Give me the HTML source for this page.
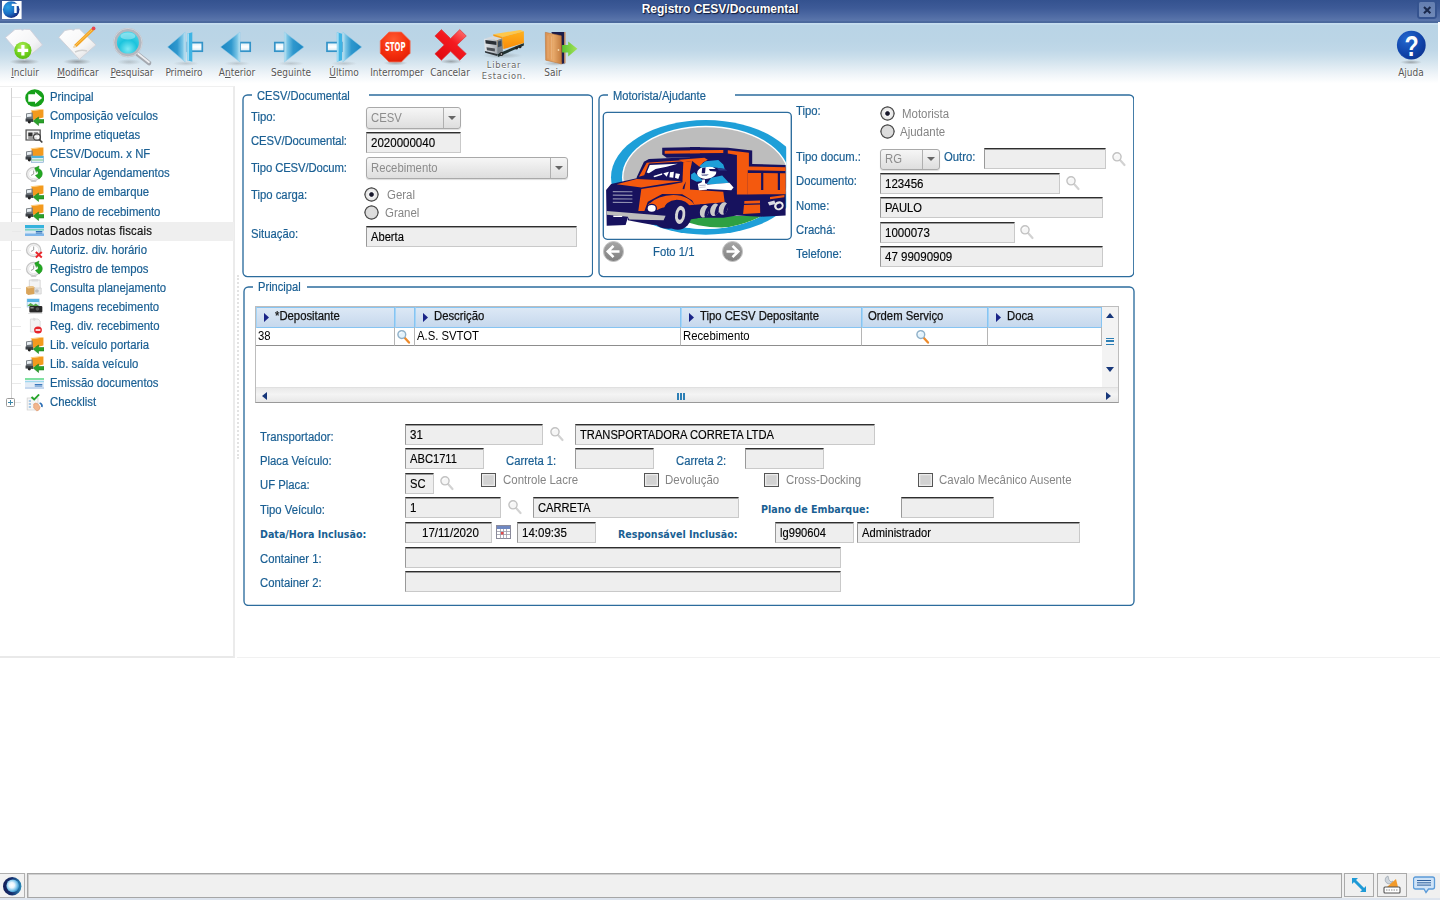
<!DOCTYPE html>
<html lang="pt-BR">
<head>
<meta charset="utf-8">
<title>Registro CESV/Documental</title>
<style>
*{box-sizing:border-box;margin:0;padding:0}
html,body{width:1440px;height:900px;overflow:hidden;background:#fff}
body{position:relative;font-family:"Liberation Sans",Arial,sans-serif;font-size:11px;color:#000}
.abs{position:absolute}
svg{display:block}
#titlebar{position:absolute;left:0;top:0;width:1440px;height:22.6px;background:linear-gradient(#34528f 0%,#3d5a97 35%,#4f6ba4 70%,#5a75ab 89%,#4a689c 94%,#4a689c 100%)}
#title{position:absolute;left:0;top:2px;width:1440px;text-align:center;color:#fff;font-weight:bold;font-size:12px;line-height:14px;text-shadow:1px 1px 1px #0e1838,0 0 1.5px #1a2a55}
#closebtn{position:absolute;left:1418.800px;top:1.7px;width:15.8px;height:15.8px;border-radius:1.5px;background:linear-gradient(#647eb0,#7089b8);box-shadow:0 0 0 2px #35538f}
#toolbar{position:absolute;left:0;top:22.6px;width:1438px;height:61.4px;background:linear-gradient(#c8dff0 0%,#c4dcee 2%,#b9d4e6 4%,#bbd5e6 30%,#c0d8e8 45%,#cde0ec 58%,#deeaf2 71%,#f0f5f9 85%,#ffffff 99%)}
#tbright{position:absolute;left:1438px;top:22px;width:2px;height:62px;background:#fff}
.tbi{position:absolute;top:24px;width:48px;height:46px}
.tbl,.tbl2{position:absolute;width:80px;text-align:center;top:66.7px;font-family:"DejaVu Sans Condensed","DejaVu Sans",sans-serif;font-size:10px;line-height:12px;color:#555;text-shadow:0 1px 0 #fff,0 0 2px #fff}
.tbl2{top:58.8px;line-height:11.1px;letter-spacing:0.75px;font-size:9.2px;color:#666}
#left{position:absolute;left:0;top:86px;width:235.4px;height:572.3px;border-right:2px solid #ebebeb;border-bottom:2px solid #e9e9e9;border-top:1px solid #f0f0f0}
#treeline{position:absolute;left:11px;top:88px;width:0;height:315px;border-left:1px solid #d2d2d2}
.tr{position:absolute;left:0;width:234px;height:19px;line-height:19px;color:#1a5f93;font-size:12px;-webkit-text-stroke:0.2px #1a5f93}
.tr.sel{background:#efefef;color:#111;letter-spacing:0.2px;-webkit-text-stroke:0.2px #111}
.tr b{position:absolute;left:50px;top:0;font-weight:normal;white-space:nowrap;transform:scaleX(0.946);transform-origin:0 50%}
.tr svg{position:absolute;left:24.5px;top:0.5px}
.tr .dash{position:absolute;left:12px;top:9px;width:9px;border-top:1px solid #e9e9e9}
#plus{position:absolute;left:5.5px;top:397.500px;width:9.5px;height:9.5px;border:1px solid #9a9a9a;border-radius:1.5px;background:#fff}
#plus:before{content:"";position:absolute;left:1.25px;top:3.25px;width:5px;height:1px;background:#3a86a8}
#plus:after{content:"";position:absolute;left:3.25px;top:1.25px;width:1px;height:5px;background:#3a86a8}
.lbl{position:absolute;color:#1a5f93;white-space:nowrap;line-height:14px;font-size:12px;transform:scaleX(0.942);transform-origin:0 50%;-webkit-text-stroke:0.2px #1a5f93}
.bl{position:absolute;color:#1a5f93;white-space:nowrap;line-height:14px;font-family:"DejaVu Sans Condensed","DejaVu Sans",sans-serif;font-weight:bold;font-size:10.6px}
.gl{position:absolute;color:#858585;white-space:nowrap;line-height:14px;font-size:12px;transform:scaleX(0.955);transform-origin:0 50%}
.inp{position:absolute;height:21px;background:#eee;border:1px solid #c9c9c9;border-top:1px solid #2e2e2e;border-left:1px solid #999;box-shadow:inset 0 1px 0 #9a9a9a;line-height:21.3px;padding-left:4px;white-space:nowrap;overflow:hidden;font-size:12px;color:#000;-webkit-text-stroke:0.15px #000}
.sx{display:inline-block;transform:scaleX(0.93);transform-origin:0 50%}
.sn{display:inline-block;transform:scaleX(0.96);transform-origin:0 50%}
.sg{display:inline-block;transform:scaleX(0.942);transform-origin:0 50%}
.cmb{position:absolute;height:22px;border:1px solid #a9a9a9;border-radius:3px;background:linear-gradient(#f6f6f6,#dedede);color:#8c8c8c;line-height:20px;padding-left:4px;font-size:12px;box-shadow:0 1px 1px #ddd}
.cmb i{position:absolute;right:0;top:0;width:17px;height:20px;border-left:1px solid #b0b0b0}
.cmb i:after{content:"";position:absolute;left:4px;top:calc(50% - 2px);border:4px solid transparent;border-top:4px solid #666;border-bottom:0}
.grp{position:absolute}
.leg{position:absolute;background:#fff;color:#1a5f93;line-height:14px;height:14px;white-space:nowrap;font-size:12px;padding-left:5px;-webkit-text-stroke:0.2px #1a5f93}
.leg span{display:inline-block;transform:scaleX(0.928);transform-origin:0 50%}
.rad{position:absolute;width:15px;height:15px;border-radius:50%;background:radial-gradient(circle,#dedede 0,#dcdcdc 5.4px,#555 6.3px,#555 6.9px,rgba(85,85,85,0) 7.5px)}
.rad.on{background:radial-gradient(circle,#16162a 0,#16162a 1.8px,#f2f2f2 2.8px,#e6e6e6 5.4px,#555 6.3px,#555 6.9px,rgba(85,85,85,0) 7.5px)}
.chk{position:absolute;width:14.5px;height:14.5px;border:1.2px solid #555;background:#d2d2d2;box-shadow:inset 0 0 0 1.3px #ececec}
#photo{position:absolute;left:603px;top:112px;width:188px;height:128px;background:#fff}
#photof{position:absolute;left:602px;top:111px}
#grid{position:absolute;left:255px;top:306px;width:864px;height:97px;border:1px solid #bdbdbd;border-bottom:1px solid #999;background:#fff;overflow:hidden;font-size:12px}
.gh{position:absolute;top:0;height:20.5px;line-height:16.5px;background:linear-gradient(#dce8f5,#c6d8ed);border:1px solid #86c4f2;border-left-color:#a4d4f7;white-space:nowrap;color:#111;-webkit-text-stroke:0.25px #111}
.gh .ha{position:absolute;left:6.5px;top:4.5px;width:5.5px;height:10px;background:#1a2488;clip-path:polygon(0 0,100% 50%,0 100%)}
.gc{position:absolute;top:20px;height:19px;line-height:18px;border-right:1px solid #b5b5b5;border-bottom:1px solid #8d8d8d;padding-left:2px;white-space:nowrap}
#vs{position:absolute;left:846px;top:0;width:17px;height:80px;background:#f3f3f3}
#vs .up{position:absolute;left:4px;top:6px;border:4px solid transparent;border-bottom:5px solid #17377a;border-top:0}
#vs .dn{position:absolute;left:4px;top:60px;border:4px solid transparent;border-top:5px solid #17377a;border-bottom:0}
#vs .grip{position:absolute;left:4px;top:31px;width:8px;height:7px;border-top:1.5px solid #2d7fb5;border-bottom:1.5px solid #2d7fb5}
#vs .grip:after{content:"";position:absolute;left:0;top:1.2px;width:8px;height:1.5px;background:#2d7fb5}
#hs{position:absolute;left:0;top:79.5px;width:863px;height:17px;background:linear-gradient(#e9e9e9,#f4f4f4 40%,#e4e4e4);border-top:1px solid #e0e0e0}
#hs .lf{position:absolute;left:6px;top:4px;border:4px solid transparent;border-right:5px solid #17377a;border-left:0}
#hs .rt{position:absolute;left:850px;top:4px;border:4px solid transparent;border-left:5px solid #17377a;border-right:0}
#hs .hgrip{position:absolute;left:421px;top:5px;width:8px;height:7px;border-left:2px solid #2d7fb5;border-right:2px solid #2d7fb5}
#hs .hgrip:after{content:"";position:absolute;left:1px;top:0;width:2px;height:7px;background:#2d7fb5}
#hsep{position:absolute;left:237px;top:657px;width:1203px;height:1.4px;background:#f1f1f1}
#status{position:absolute;left:0;top:872.5px;width:1440px;height:27.5px;background:#f0f0f0;border-bottom:2px solid #dde4ee}
#sfield{position:absolute;left:27px;top:873px;width:1315px;height:24.5px;border:1px solid #a6a6a6;box-shadow:inset 1px 1px 0 #cfcfcf;background:#f0f0f0}
#slogo{position:absolute;left:0;top:873px;width:24.5px;height:24.5px;border:1px solid #b0b0b0;border-left:0;background:#f2f2f2}
.sbtn{position:absolute;top:873px;width:30px;height:24px;border:1px solid #aaa;background:#f0f0f0}
#split{position:absolute;left:237px;top:275px;width:0;height:184px;border-left:2px dotted #e2e2e2}
</style>
</head>
<body>
<div id="titlebar"></div>
<div id="title">Registro CESV/Documental</div>
<div class="abs" style="left:2px;top:0.8px"><svg width="19.6" height="18.6" viewBox="0 0 19.6 18.6" ><rect x="0" y="0" width="19.6" height="18.6" fill="#fff"/><defs><radialGradient id="g1" cx="0.3" cy="0.35" r="0.75"><stop offset="0" stop-color="#2aa2e6"/><stop offset="0.55" stop-color="#1c6fc4"/><stop offset="1" stop-color="#16257c"/></radialGradient></defs><circle cx="9.2" cy="8.600" r="8.3" fill="url(#g1)"/><path d="M9.700 2.700 h7.100 v2.200 h-2.100 v7.200 h-2.500 v-7.200 h-2.500z" fill="#fff"/></svg></div>
<div id="closebtn"><svg width="15.8" height="15.8" viewBox="0 0 15.8 15.8" ><path d="M5 5 L11.4 11.2 M11.4 5 L5 11.2" stroke="#1a294c" stroke-width="2.1" stroke-linecap="butt"/></svg></div>
<div id="toolbar"></div><div id="tbright"></div>
<div class="tbi" style="left:1px"><svg width="48" height="46" viewBox="0 0 48 46" ><defs><radialGradient id="g3"><stop offset="0" stop-color="#555" stop-opacity="0.5"/><stop offset="1" stop-color="#555" stop-opacity="0"/></radialGradient></defs><ellipse cx="23.4" cy="37.7" rx="15" ry="3" fill="url(#g3)"/><defs><linearGradient id="g2" x1="0" y1="0" x2="1" y2="1"><stop offset="0" stop-color="#fff"/><stop offset="0.6" stop-color="#f4f4f6"/><stop offset="1" stop-color="#d4d4da"/></linearGradient></defs><path d="M14 5.5 L19.500 5.3 L21.5 6.200 L23.500 5.3 L29 5.5 L41.5 21 L23.5 36 L4.5 13.5 Z" fill="url(#g2)" stroke="#cfcfda" stroke-width="0.9" stroke-linejoin="round"/><defs><radialGradient id="g4" cx="0.45" cy="0.3" r="0.75"><stop offset="0" stop-color="#b8f060"/><stop offset="0.6" stop-color="#6fd01c"/><stop offset="1" stop-color="#55b812"/></radialGradient></defs><circle cx="21.9" cy="26.3" r="8.6" fill="url(#g4)"/><path d="M21.9 21 v10.6 M16.6 26.300 h10.6" stroke="#fff" stroke-width="3.2"/></svg></div>
<div class="tbl" style="left:-15px"><u>I</u>ncluir</div>
<div class="tbi" style="left:54px"><svg width="48" height="46" viewBox="0 0 48 46" ><defs><radialGradient id="g6"><stop offset="0" stop-color="#555" stop-opacity="0.5"/><stop offset="1" stop-color="#555" stop-opacity="0"/></radialGradient></defs><ellipse cx="23.2" cy="37.7" rx="14" ry="3" fill="url(#g6)"/><defs><linearGradient id="g5" x1="0" y1="0" x2="1" y2="1"><stop offset="0" stop-color="#fff"/><stop offset="0.6" stop-color="#f6f6f6"/><stop offset="1" stop-color="#d8d8dc"/></linearGradient></defs><path d="M10.9 6.4 L17 5.4 L19.500 6.300 L21.500 5 L25.4 4.9 L41.9 20.9 L25.4 35.4 L4.8 13.300 Z" fill="url(#g5)" stroke="#cfcfd6" stroke-width="0.9" stroke-linejoin="round"/><path d="M21 28 q6 -3 12 -1" stroke="#d0d0d0" stroke-width="1.6" fill="none"/><path d="M19.3 23.6 L20.6 20.5 L37.6 4.2 L39.9 6.5 L22.6 23 Z" fill="#f4a321"/><path d="M21.5 21.5 L38.7 5.3" stroke="#fbd06a" stroke-width="0.8"/><path d="M19.3 23.6 L20.6 20.5 L22.600 23Z" fill="#ecd9b4"/><circle cx="39.6" cy="4.4" r="1.9" fill="#e8464e"/></svg></div>
<div class="tbl" style="left:38px"><u>M</u>odificar</div>
<div class="tbi" style="left:108px"><svg width="48" height="46" viewBox="0 0 48 46" ><defs><radialGradient id="g8"><stop offset="0" stop-color="#555" stop-opacity="0.25"/><stop offset="1" stop-color="#555" stop-opacity="0"/></radialGradient></defs><ellipse cx="21" cy="38" rx="12" ry="3" fill="url(#g8)"/><defs><radialGradient id="g7" cx="0.5" cy="0.75" r="0.8"><stop offset="0" stop-color="#7ee9f4"/><stop offset="0.45" stop-color="#1cc4dd"/><stop offset="1" stop-color="#5fdcee"/></radialGradient></defs><path d="M29.5 30 L41 39" stroke="#a4a8af" stroke-width="4.6" stroke-linecap="round"/><path d="M30 29.5 L41 38.300" stroke="#eceef1" stroke-width="1.8" stroke-linecap="round"/><circle cx="19.9" cy="18.6" r="12.8" fill="url(#g7)" stroke="#b3b7bf" stroke-width="3.6"/><circle cx="19.9" cy="18.6" r="14.2" fill="none" stroke="#d9dbe0" stroke-width="0.8"/><ellipse cx="19.9" cy="12" rx="7.5" ry="3.6" fill="#fff" opacity="0.35"/></svg></div>
<div class="tbl" style="left:92px"><u>P</u>esquisar</div>
<div class="tbi" style="left:160px"><svg width="48" height="46" viewBox="0 0 48 46" ><defs><radialGradient id="g9"><stop offset="0" stop-color="#555" stop-opacity="0.22"/><stop offset="1" stop-color="#555" stop-opacity="0"/></radialGradient></defs><ellipse cx="26" cy="39.5" rx="13" ry="2.5" fill="url(#g9)"/><defs><linearGradient id="g10" x1="0" y1="0" x2="0" y2="1"><stop offset="0" stop-color="#d9eef8"/><stop offset="0.5" stop-color="#ffffff"/><stop offset="1" stop-color="#cfe8f4"/></linearGradient></defs><rect x="27.5" y="18.6" width="14.8" height="8.6" fill="url(#g10)" stroke="#3393c8" stroke-width="1.7"/><polygon points="27.2,9.8 32.3,8.2 32.3,37.800 27.2,36.200" fill="#3fb4e4"/><polygon points="27.2,9.8 29,9.2 29,36.800 27.2,36.2" fill="#9fdcf4"/><defs><linearGradient id="g11" x1="0" y1="0" x2="1" y2="0"><stop offset="0" stop-color="#1c86c2"/><stop offset="0.55" stop-color="#2f98ce"/><stop offset="0.85" stop-color="#79c4e5"/><stop offset="1" stop-color="#c4e6f3"/></linearGradient></defs><polygon points="7.6,23 25.2,8 25.2,38" fill="url(#g11)" stroke="#8fcbe8" stroke-width="0.5"/></svg></div>
<div class="tbl" style="left:144px">Primeiro</div>
<div class="tbi" style="left:213px"><svg width="48" height="46" viewBox="0 0 48 46" ><defs><radialGradient id="g12"><stop offset="0" stop-color="#555" stop-opacity="0.22"/><stop offset="1" stop-color="#555" stop-opacity="0"/></radialGradient></defs><ellipse cx="24" cy="39.5" rx="13" ry="2.5" fill="url(#g12)"/><defs><linearGradient id="g13" x1="0" y1="0" x2="0" y2="1"><stop offset="0" stop-color="#d9eef8"/><stop offset="0.5" stop-color="#ffffff"/><stop offset="1" stop-color="#cfe8f4"/></linearGradient></defs><rect x="27" y="18.6" width="10.2" height="8.6" fill="url(#g13)" stroke="#3393c8" stroke-width="1.7"/><defs><linearGradient id="g14" x1="0" y1="0" x2="1" y2="0"><stop offset="0" stop-color="#1c86c2"/><stop offset="0.55" stop-color="#2f98ce"/><stop offset="0.85" stop-color="#79c4e5"/><stop offset="1" stop-color="#c4e6f3"/></linearGradient></defs><polygon points="7.6,23 27,8 27,38" fill="url(#g14)" stroke="#8fcbe8" stroke-width="0.5"/></svg></div>
<div class="tbl" style="left:197px">A<u>n</u>terior</div>
<div class="tbi" style="left:267px"><svg width="48" height="46" viewBox="0 0 48 46" ><defs><radialGradient id="g15"><stop offset="0" stop-color="#555" stop-opacity="0.22"/><stop offset="1" stop-color="#555" stop-opacity="0"/></radialGradient></defs><ellipse cx="24" cy="39.5" rx="13" ry="2.5" fill="url(#g15)"/><defs><linearGradient id="g16" x1="0" y1="0" x2="0" y2="1"><stop offset="0" stop-color="#d9eef8"/><stop offset="0.5" stop-color="#ffffff"/><stop offset="1" stop-color="#cfe8f4"/></linearGradient></defs><rect x="7.8" y="18.6" width="9.6" height="8.6" fill="url(#g16)" stroke="#3393c8" stroke-width="1.7"/><defs><linearGradient id="g17" x1="1" y1="0" x2="0" y2="0"><stop offset="0" stop-color="#1c86c2"/><stop offset="0.55" stop-color="#2f98ce"/><stop offset="0.85" stop-color="#79c4e5"/><stop offset="1" stop-color="#c4e6f3"/></linearGradient></defs><polygon points="36.9,23 17.4,8 17.4,38" fill="url(#g17)" stroke="#8fcbe8" stroke-width="0.5"/></svg></div>
<div class="tbl" style="left:251px">Se<u>g</u>uinte</div>
<div class="tbi" style="left:320px"><svg width="48" height="46" viewBox="0 0 48 46" ><defs><radialGradient id="g18"><stop offset="0" stop-color="#555" stop-opacity="0.22"/><stop offset="1" stop-color="#555" stop-opacity="0"/></radialGradient></defs><ellipse cx="24" cy="39.5" rx="13" ry="2.5" fill="url(#g18)"/><defs><linearGradient id="g19" x1="0" y1="0" x2="0" y2="1"><stop offset="0" stop-color="#d9eef8"/><stop offset="0.5" stop-color="#ffffff"/><stop offset="1" stop-color="#cfe8f4"/></linearGradient></defs><rect x="7" y="18.6" width="15.8" height="8.6" fill="url(#g19)" stroke="#3393c8" stroke-width="1.7"/><polygon points="16.9,8.2 22,9.8 22,36.200 16.9,37.800" fill="#3fb4e4"/><polygon points="16.9,8.2 18.7,8.800 18.7,37.200 16.9,37.800" fill="#9fdcf4"/><defs><linearGradient id="g20" x1="1" y1="0" x2="0" y2="0"><stop offset="0" stop-color="#1c86c2"/><stop offset="0.55" stop-color="#2f98ce"/><stop offset="0.85" stop-color="#79c4e5"/><stop offset="1" stop-color="#c4e6f3"/></linearGradient></defs><polygon points="41.7,23 22.8,8 22.8,38" fill="url(#g20)" stroke="#8fcbe8" stroke-width="0.5"/></svg></div>
<div class="tbl" style="left:304px"><u>Ú</u>ltimo</div>
<div class="tbi" style="left:373px"><svg width="48" height="46" viewBox="0 0 48 46" ><defs><radialGradient id="g22"><stop offset="0" stop-color="#555" stop-opacity="0.4"/><stop offset="1" stop-color="#555" stop-opacity="0"/></radialGradient></defs><ellipse cx="22.5" cy="39" rx="12" ry="2.5" fill="url(#g22)"/><defs><radialGradient id="g21" cx="0.45" cy="0.25" r="0.85"><stop offset="0" stop-color="#ff5a30"/><stop offset="0.6" stop-color="#f32d0c"/><stop offset="1" stop-color="#dc1c06"/></radialGradient></defs><polygon points="16.0,8.1 28.4,8.1 37.1,16.8 37.1,29.2 28.4,37.9 16.0,37.9 7.3,29.2 7.3,16.8" fill="url(#g21)" stroke="#f26a50" stroke-width="0.8"/><text x="22.2" y="27.400" font-family="DejaVu Sans Condensed,DejaVu Sans,sans-serif" font-weight="bold" font-size="11.5" fill="#fff" text-anchor="middle" textLength="20.6" lengthAdjust="spacingAndGlyphs">STOP</text></svg></div>
<div class="tbl" style="left:357px">Interromper</div>
<div class="tbi" style="left:426px"><svg width="48" height="46" viewBox="0 0 48 46" ><defs><radialGradient id="g24"><stop offset="0" stop-color="#555" stop-opacity="0.45"/><stop offset="1" stop-color="#555" stop-opacity="0"/></radialGradient></defs><ellipse cx="25" cy="37.5" rx="11" ry="2.5" fill="url(#g24)"/><defs><linearGradient id="g23" x1="1" y1="0" x2="0.2" y2="1"><stop offset="0" stop-color="#ff7a7a"/><stop offset="0.45" stop-color="#f41a20"/><stop offset="1" stop-color="#e00a10"/></linearGradient></defs><path d="M15.4 5.6 L24.6 14.6 L33.800 5.6 L40.300 12 L31 20.9 L40.300 29.800 L33.800 36.2 L24.6 27.2 L15.4 36.2 L8.9 29.800 L18.2 20.9 L8.9 12 Z" fill="url(#g23)" stroke="#d8363c" stroke-width="0.7" stroke-linejoin="round"/></svg></div>
<div class="tbl" style="left:410px">Cancelar</div>
<div class="tbi" style="left:480px"><svg width="48" height="46" viewBox="0 0 48 46" ><defs><linearGradient id="g25" x1="0" y1="0" x2="0" y2="1"><stop offset="0" stop-color="#ffb21e"/><stop offset="1" stop-color="#f88a08"/></linearGradient><linearGradient id="g26" x1="0" y1="0" x2="1" y2="0"><stop offset="0" stop-color="#e6e9ec"/><stop offset="1" stop-color="#a9afb5"/></linearGradient></defs><defs><radialGradient id="g27"><stop offset="0" stop-color="#555" stop-opacity="0.3"/><stop offset="1" stop-color="#555" stop-opacity="0"/></radialGradient></defs><ellipse cx="22" cy="31.5" rx="20" ry="3" fill="url(#g27)"/><polygon points="17.2,30.1 43.9,19 43.9,21.5 18,33" fill="#233"/><polygon points="13.3,10.2 40.1,6 43.9,7.2 22.5,12.9" fill="#ffc74a"/><polygon points="22.5,12.9 43.9,7.2 43.9,19 23.6,25.1" fill="url(#g25)"/><polygon points="13.3,10.2 22.5,12.9 23.6,25.1 14,22" fill="#f59a10"/><polygon points="4.9,14.4 13.3,12.1 22.1,14.4 17.2,16.3" fill="#d5d9dd"/><polygon points="4.2,14.8 17.2,16.3 17.2,30.100 4.9,27" fill="url(#g26)"/><polygon points="17.2,16.3 22.1,14.4 22.9,27.800 17.2,30.1" fill="#7d858c"/><polygon points="18,17.5 21.4,16.2 21.6,22 18,23.300" fill="#3a4a5a"/><polygon points="5.3,16 16.4,17.5 16.4,20.9 5.7,19.4" fill="#2a2f35"/><polygon points="6.5,23.2 14.9,24.4 14.9,27.4 7,26.3" fill="#4a4f55"/><polygon points="4.9,27 17.2,30.100 17.2,32 5.2,28.800" fill="#30353a"/><circle cx="21.400" cy="30" r="1.9" fill="#222"/><circle cx="21.4" cy="30" r="0.8" fill="#ddd"/><circle cx="36.5" cy="24" r="1.5" fill="#222"/><circle cx="40" cy="22.800" r="1.5" fill="#222"/></svg></div>
<div class="tbl2" style="left:464px">Liberar<br>Estacion.</div>
<div class="tbi" style="left:529px"><svg width="50" height="46" viewBox="0 0 50 46" style="overflow:visible"><defs><linearGradient id="g28" x1="0" y1="0" x2="1" y2="0"><stop offset="0" stop-color="#d98f4e"/><stop offset="0.5" stop-color="#e7a96a"/><stop offset="1" stop-color="#c27a3c"/></linearGradient><linearGradient id="g29" x1="0" y1="0" x2="1" y2="0"><stop offset="0" stop-color="#58c22e"/><stop offset="1" stop-color="#a4e25c"/></linearGradient></defs><defs><radialGradient id="g30"><stop offset="0" stop-color="#555" stop-opacity="0.3"/><stop offset="1" stop-color="#555" stop-opacity="0"/></radialGradient></defs><ellipse cx="26" cy="39.5" rx="12" ry="2.5" fill="url(#g30)"/><polygon points="22.4,7.9 36.100,7.9 36.1,39.3 32.7,40" fill="#1a1c4a"/><polygon points="35.2,8 36.6,8 36.6,39 35.2,39.400" fill="#d8a070"/><polygon points="33.100,20.900 39.2,20.9 39.2,17.5 48.4,24.7 39.2,32.4 39.2,28.6 33.1,28.6" fill="url(#g29)"/><polygon points="16.3,8.3 32.300,11.800 32.7,40 16.7,36.200" fill="url(#g28)" stroke="#b46f35" stroke-width="0.5"/><path d="M19 11.500 L19 34.500 M22.500 12.500 L22.5 35.500" stroke="#f0c090" stroke-width="0.6" opacity="0.8"/><circle cx="29.500" cy="26" r="0.9" fill="#f6d9a8"/></svg></div>
<div class="tbl" style="left:513px">Sair</div>
<div class="tbi" style="left:1387px"><svg width="48" height="46" viewBox="0 0 48 46" ><defs><radialGradient id="g32"><stop offset="0" stop-color="#555" stop-opacity="0.45"/><stop offset="1" stop-color="#555" stop-opacity="0"/></radialGradient></defs><ellipse cx="24" cy="38.2" rx="11" ry="2.2" fill="url(#g32)"/><defs><radialGradient id="g31" cx="0.35" cy="0.3" r="0.85"><stop offset="0" stop-color="#2468cf"/><stop offset="0.55" stop-color="#1247ad"/><stop offset="1" stop-color="#0b2e8a"/></radialGradient></defs><circle cx="24.3" cy="21.1" r="14.4" fill="url(#g31)"/><path d="M10.500 25 A14.400 14.400 0 0 0 24 35.500 A20 20 0 0 1 10.500 25Z" fill="#2b6fd6" opacity="0.35"/><g transform="translate(24.5,32.200) scale(0.8,1)"><text x="0" y="0" font-family="Liberation Sans,Arial,sans-serif" font-weight="bold" font-size="29" fill="#fdfdfd" text-anchor="middle">?</text></g></svg></div>
<div class="tbl" style="left:1371px">Ajuda</div>
<div id="left"></div>
<div id="treeline"></div>
<div class="tr" style="top:88.1px"><i class="dash"></i><svg width="19.5" height="18" viewBox="0 0 18 18"  preserveAspectRatio="none"><circle cx="9" cy="9" r="8.8" fill="#16a01a"/><path d="M3 5.800 Q3 5.200 3.600 5.200 L9.300 5.200 L9.300 2.900 L15.800 9 L9.300 15.100 L9.300 12.800 L3.600 12.800 Q3 12.800 3 12.200Z" fill="#fff"/></svg><b>Principal</b></div>
<div class="tr" style="top:107.2px"><i class="dash"></i><svg width="19.5" height="18" viewBox="0 0 18 18"  preserveAspectRatio="none"><path d="M6 3 L17 1.5 L17 9.5 L7 12 Z" fill="#f39a1e"/><path d="M6 3 L17 1.5 L16 1 L5 2.3Z" fill="#fbc56a"/><path d="M1 5.5 L7 4.5 L7.5 13 L1 12.5Z" fill="#70777d"/><path d="M1.8 6.3 L6 5.6 L6 8.6 L1.8 9Z" fill="#e8eef2"/><path d="M0.5 10.5 L7.5 11 L7.5 14 L0.5 13.5Z" fill="#3c4146"/><circle cx="4" cy="14" r="1.4" fill="#222"/><path d="M7.5 13 l5 -4 v2.5 h5 v3.5 h-5 v2.5z" fill="#2aa12a" stroke="#157a15" stroke-width="0.5"/></svg><b>Composição veículos</b></div>
<div class="tr" style="top:126.2px"><i class="dash"></i><svg width="19.5" height="18" viewBox="0 0 18 18"  preserveAspectRatio="none"><rect x="1" y="3" width="13" height="10" fill="#f2f2f2" stroke="#555" stroke-width="1.2"/><rect x="3" y="5.5" width="4" height="4" fill="#333"/><path d="M8 6h4M8 8h4M3 11h8" stroke="#444" stroke-width="1"/><circle cx="11" cy="10" r="3.2" fill="#fff" fill-opacity="0.7" stroke="#444" stroke-width="1.2"/><path d="M13.2 12.5 L16 15.5" stroke="#444" stroke-width="1.6"/></svg><b>Imprime etiquetas</b></div>
<div class="tr" style="top:145.3px"><i class="dash"></i><svg width="19.5" height="18" viewBox="0 0 18 18"  preserveAspectRatio="none"><path d="M6 3 L17 1.5 L17 9.5 L7 12 Z" fill="#f39a1e"/><path d="M6 3 L17 1.5 L16 1 L5 2.3Z" fill="#fbc56a"/><path d="M1 5.5 L7 4.5 L7.5 13 L1 12.5Z" fill="#70777d"/><path d="M1.8 6.3 L6 5.6 L6 8.6 L1.8 9Z" fill="#e8eef2"/><path d="M0.5 10.5 L7.5 11 L7.5 14 L0.5 13.5Z" fill="#3c4146"/><circle cx="4" cy="14" r="1.4" fill="#222"/><rect x="6" y="10" width="11" height="6.5" fill="#dfeaf5" stroke="#7aa7cf" stroke-width="0.6"/><rect x="6" y="10" width="11" height="2" fill="#4fb3d9"/><rect x="6" y="13.5" width="11" height="1" fill="#7fd08a"/></svg><b>CESV/Docum. x NF</b></div>
<div class="tr" style="top:164.3px"><i class="dash"></i><svg width="19.5" height="18" viewBox="0 0 18 18"  preserveAspectRatio="none"><circle cx="8" cy="9" r="6.6" fill="#f1f1f1" stroke="#c6c6c6" stroke-width="1.2"/><circle cx="8" cy="9" r="4.6" fill="#fff" stroke="#ddd" stroke-width="0.6"/><path d="M8 9 V5.5 M8 9 L5.5 10.5" stroke="#999" stroke-width="0.9"/><path d="M9 3 L13 1 L12.5 3.5 C16 5 17 9 15 12 L13 14 L9.5 10.5 L12 9 C12.5 7.5 12 6 10.5 5.5 L10.5 7.5Z" fill="#22a822" stroke="#168016" stroke-width="0.4"/><path d="M5 15.5 h6 l-1 1.5 h-4z" fill="#ccc"/></svg><b>Vincular Agendamentos</b></div>
<div class="tr" style="top:183.4px"><i class="dash"></i><svg width="19.5" height="18" viewBox="0 0 18 18"  preserveAspectRatio="none"><path d="M6 3 L17 1.5 L17 9.5 L7 12 Z" fill="#f39a1e"/><path d="M6 3 L17 1.5 L16 1 L5 2.3Z" fill="#fbc56a"/><path d="M1 5.5 L7 4.5 L7.5 13 L1 12.5Z" fill="#70777d"/><path d="M1.8 6.3 L6 5.6 L6 8.6 L1.8 9Z" fill="#e8eef2"/><path d="M0.5 10.5 L7.5 11 L7.5 14 L0.5 13.5Z" fill="#3c4146"/><circle cx="4" cy="14" r="1.4" fill="#222"/><path d="M7.5 13 l5 -4 v2.5 h5 v3.5 h-5 v2.5z" fill="#2aa12a" stroke="#157a15" stroke-width="0.5"/></svg><b>Plano de embarque</b></div>
<div class="tr" style="top:202.5px"><i class="dash"></i><svg width="19.5" height="18" viewBox="0 0 18 18"  preserveAspectRatio="none"><path d="M6 3 L17 1.5 L17 9.5 L7 12 Z" fill="#f39a1e"/><path d="M6 3 L17 1.5 L16 1 L5 2.3Z" fill="#fbc56a"/><path d="M1 5.5 L7 4.5 L7.5 13 L1 12.5Z" fill="#70777d"/><path d="M1.8 6.3 L6 5.6 L6 8.6 L1.8 9Z" fill="#e8eef2"/><path d="M0.5 10.5 L7.5 11 L7.5 14 L0.5 13.5Z" fill="#3c4146"/><circle cx="4" cy="14" r="1.4" fill="#222"/><path d="M7.5 13 l5 -4 v2.5 h5 v3.5 h-5 v2.5z" fill="#2aa12a" stroke="#157a15" stroke-width="0.5"/></svg><b>Plano de recebimento</b></div>
<div class="tr sel" style="top:221.5px"><i class="dash"></i><svg width="19.5" height="18" viewBox="0 0 18 18"  preserveAspectRatio="none"><rect x="0" y="3" width="18" height="11" fill="#d6e7f5"/><rect x="0" y="3" width="18" height="3.2" fill="#35b3dd"/><rect x="0" y="7" width="18" height="1.6" fill="#7bd3c0"/><rect x="0" y="11.5" width="18" height="2.5" fill="#7db5ea"/><path d="M10 9.5h6M10 11h6" stroke="#2d6fb5" stroke-width="1"/></svg><b>Dados notas fiscais</b></div>
<div class="tr" style="top:240.6px"><i class="dash"></i><svg width="19.5" height="18" viewBox="0 0 18 18"  preserveAspectRatio="none"><circle cx="8" cy="9" r="6.6" fill="#f1f1f1" stroke="#c6c6c6" stroke-width="1.2"/><circle cx="8" cy="9" r="4.6" fill="#fff" stroke="#ddd" stroke-width="0.6"/><path d="M8 9 V5.5 M8 9 L5.5 10.5" stroke="#999" stroke-width="0.9"/><path d="M10 11 L15.5 16.5 M15.5 11 L10 16.5" stroke="#e8262b" stroke-width="1.8"/></svg><b>Autoriz. div. horário</b></div>
<div class="tr" style="top:259.6px"><i class="dash"></i><svg width="19.5" height="18" viewBox="0 0 18 18"  preserveAspectRatio="none"><circle cx="8" cy="9" r="6.6" fill="#f1f1f1" stroke="#c6c6c6" stroke-width="1.2"/><circle cx="8" cy="9" r="4.6" fill="#fff" stroke="#ddd" stroke-width="0.6"/><path d="M8 9 V5.5 M8 9 L5.5 10.5" stroke="#999" stroke-width="0.9"/><path d="M9 3 L13 1 L12.5 3.5 C16 5 17 9 15 12 L13 14 L9.5 10.5 L12 9 C12.5 7.5 12 6 10.5 5.5 L10.5 7.5Z" fill="#22a822" stroke="#168016" stroke-width="0.4"/><path d="M5 15.5 h6 l-1 1.5 h-4z" fill="#ccc"/></svg><b>Registro de tempos</b></div>
<div class="tr" style="top:278.7px"><i class="dash"></i><svg width="19.5" height="18" viewBox="0 0 18 18"  preserveAspectRatio="none"><path d="M4 1 h10 v13 h-10z" fill="#f4f4f4" stroke="#d0d0d0" stroke-width="0.8"/><rect x="6" y="0" width="6" height="2.5" fill="#ddd"/><path d="M1 8 L7 7 L9 8.5 L9 15 L3 16 L1 14.5Z" fill="#d9a45a"/><path d="M1 8 L7 7 L9 8.5 L3 9.5Z" fill="#ecc78e"/><path d="M9 9 h6 v6 h-6z" fill="#e9e9e9" stroke="#ccc" stroke-width="0.6"/><circle cx="11" cy="12" r="1.8" fill="#bfbfbf"/></svg><b>Consulta planejamento</b></div>
<div class="tr" style="top:297.8px"><i class="dash"></i><svg width="19.5" height="18" viewBox="0 0 18 18"  preserveAspectRatio="none"><rect x="2" y="1" width="11" height="8" fill="#dff0fb" stroke="#9cc6e4" stroke-width="0.7"/><rect x="2" y="1" width="11" height="3" fill="#58b4e6"/><path d="M2 8 l3 -3 l3 2 l2 -1.5 l3 2.5z" fill="#58a84a"/><rect x="4" y="8" width="12" height="6.5" rx="1" fill="#2a2a2a"/><circle cx="11.5" cy="11" r="2.2" fill="#555" stroke="#111" stroke-width="0.6"/><rect x="5" y="9" width="3" height="1.5" fill="#888"/><path d="M3 15.5 h13" stroke="#ddd" stroke-width="1"/></svg><b>Imagens recebimento</b></div>
<div class="tr" style="top:316.8px"><i class="dash"></i><svg width="19.5" height="18" viewBox="0 0 18 18"  preserveAspectRatio="none"><path d="M5 2 h7 l2 2 v11 h-9z" fill="#f3f3f3" stroke="#d8d8d8" stroke-width="0.8"/><path d="M8 0.5 l2 1.5 l-1 2 l-2 -1z" fill="#ddd"/><circle cx="12" cy="13" r="3.6" fill="#e5242a"/><rect x="9.8" y="12.2" width="4.4" height="1.6" fill="#fff"/></svg><b>Reg. div. recebimento</b></div>
<div class="tr" style="top:335.9px"><i class="dash"></i><svg width="19.5" height="18" viewBox="0 0 18 18"  preserveAspectRatio="none"><path d="M6 3 L17 1.5 L17 9.5 L7 12 Z" fill="#f39a1e"/><path d="M6 3 L17 1.5 L16 1 L5 2.3Z" fill="#fbc56a"/><path d="M1 5.5 L7 4.5 L7.5 13 L1 12.5Z" fill="#70777d"/><path d="M1.8 6.3 L6 5.6 L6 8.6 L1.8 9Z" fill="#e8eef2"/><path d="M0.5 10.5 L7.5 11 L7.5 14 L0.5 13.5Z" fill="#3c4146"/><circle cx="4" cy="14" r="1.4" fill="#222"/><path d="M7.5 13 l5 -4 v2.5 h5 v3.5 h-5 v2.5z" fill="#2aa12a" stroke="#157a15" stroke-width="0.5"/></svg><b>Lib. veículo portaria</b></div>
<div class="tr" style="top:354.9px"><i class="dash"></i><svg width="19.5" height="18" viewBox="0 0 18 18"  preserveAspectRatio="none"><path d="M6 3 L17 1.5 L17 9.5 L7 12 Z" fill="#f39a1e"/><path d="M6 3 L17 1.5 L16 1 L5 2.3Z" fill="#fbc56a"/><path d="M1 5.5 L7 4.5 L7.5 13 L1 12.5Z" fill="#70777d"/><path d="M1.8 6.3 L6 5.6 L6 8.6 L1.8 9Z" fill="#e8eef2"/><path d="M0.5 10.5 L7.5 11 L7.5 14 L0.5 13.5Z" fill="#3c4146"/><circle cx="4" cy="14" r="1.4" fill="#222"/><path d="M7.5 13 l5 -4 v2.5 h5 v3.5 h-5 v2.5z" fill="#2aa12a" stroke="#157a15" stroke-width="0.5"/></svg><b>Lib. saída veículo</b></div>
<div class="tr" style="top:374.0px"><i class="dash"></i><svg width="19.5" height="18" viewBox="0 0 18 18"  preserveAspectRatio="none"><rect x="0" y="3" width="18" height="11" fill="#e2ecf7"/><rect x="0" y="3" width="18" height="2" fill="#7fe0a0"/><rect x="0" y="6" width="18" height="1.2" fill="#9ed8ee"/><rect x="0" y="12" width="18" height="2" fill="#c5d8ef"/><path d="M9 9.5h7M9 11h7" stroke="#3a78bd" stroke-width="1.1"/></svg><b>Emissão documentos</b></div>
<div class="tr" style="top:393.1px"><i class="dash"></i><svg width="19.5" height="18" viewBox="0 0 18 18"  preserveAspectRatio="none"><rect x="2" y="4" width="10" height="12" fill="#f6f6f6" stroke="#d0d0d0" stroke-width="0.7"/><path d="M3.5 7h2M3.5 10h2M3.5 13h2" stroke="#5b9bd5" stroke-width="1.2"/><path d="M6 3 l2.5 2.5 l4.5 -5" stroke="#25a52a" stroke-width="1.8" fill="none"/><path d="M8 10 q2 -2 4 0 l2 3 q0 3 -3 4 l-3 -3z" fill="#f2b58c" stroke="#d98e62" stroke-width="0.5"/><path d="M13.5 9 a3 3 0 0 1 2 4" stroke="#2d6fb5" stroke-width="1.6" fill="none"/></svg><b>Checklist</b></div>
<div id="plus"></div>
<div class="grp" style="left:241.5px;top:94px"><svg width="351.6" height="183.6"><rect x="1" y="1" width="349.6" height="181.6" rx="4.5" ry="4.5" fill="none" stroke="#2c6c9d" stroke-width="1.35"/></svg></div>
<div class="leg" style="left:252px;top:88.8px;width:117px;"><span>CESV/Documental</span></div>
<div class="lbl" style="left:251px;top:110px;">Tipo:</div>
<div class="cmb" style="left:366px;top:106.5px;width:95px;height:22px;line-height:20px"><span class="sg">CESV</span><i style="height:20px"></i></div>
<div class="lbl" style="left:251px;top:134px;letter-spacing:-0.1px">CESV/Documental:</div>
<div class="inp" style="left:366px;top:132px;width:95px;height:21px;"><span class="sn">2020000040</span></div>
<div class="lbl" style="left:251px;top:161px;letter-spacing:-0.12px">Tipo CESV/Docum:</div>
<div class="cmb" style="left:366px;top:157.4px;width:202px;height:22px;line-height:20px"><span class="sg">Recebimento</span><i style="height:20px"></i></div>
<div class="lbl" style="left:251px;top:188px;">Tipo carga:</div>
<div class="rad on" style="left:364px;top:187px"></div>
<div class="gl" style="left:386.8px;top:187.5px;">Geral</div>
<div class="rad" style="left:364px;top:204.9px"></div>
<div class="gl" style="left:385.3px;top:205.5px;">Granel</div>
<div class="lbl" style="left:251px;top:227px;">Situação:</div>
<div class="inp" style="left:366px;top:226px;width:211px;height:21px;"><span class="sx">Aberta</span></div>
<div class="grp" style="left:597.7px;top:94px"><svg width="536.8" height="183.6"><rect x="1" y="1" width="534.8" height="181.6" rx="4.5" ry="4.5" fill="none" stroke="#2c6c9d" stroke-width="1.35"/></svg></div>
<div class="leg" style="left:608px;top:88.8px;width:127px;"><span>Motorista/Ajudante</span></div>
<div id="photo"><svg width="188" height="128" viewBox="603 112 188 128"><clipPath id="tclip"><rect x="604" y="113" width="182.2" height="126"/></clipPath><g clip-path="url(#tclip)"><ellipse cx="705.8" cy="177.4" rx="94.8" ry="57.3" fill="#1e9fd8"/><ellipse cx="705.8" cy="177.4" rx="83.8" ry="51.6" fill="#fff"/><clipPath id="tgray"><ellipse cx="705.8" cy="177.4" rx="83.8" ry="51.6"/></clipPath><ellipse cx="705.8" cy="177.4" rx="82.4" ry="50.1" fill="#bdbdbd"/><g clip-path="url(#tgray)"><rect x="640" y="205" width="150" height="30" fill="#fff"/><ellipse cx="722" cy="198" rx="62" ry="29.5" fill="#2ea043"/><rect x="640" y="190" width="150" height="26" fill="#fff"/></g><polygon points="662.2,147.8 700.0,146.9 700.0,157.2 666.7,157.8 662.2,154.4" fill="#17125e" /><polygon points="690.0,146.9 727.8,147.8 752.2,150.6 752.2,163.9 785.6,165.0 785.6,215.6 761.1,216.7 736.7,215.6 723.3,217.8 690.0,217.8" fill="#17125e" /><polygon points="664.7,150.8 700.0,150.2 700.0,153.3 664.7,153.8" fill="#f4590e" /><polygon points="690.0,150.2 723.3,150.0 723.3,153.1 690.0,153.3" fill="#f4590e" /><polygon points="727.8,150.2 748.9,152.8 748.9,166.4 785.6,167.3 785.6,170.9 747.8,170.2 747.8,194.4 736.7,194.4 736.7,155.0 727.8,153.6" fill="#f4590e" /><polygon points="747.8,172.9 761.1,173.1 761.1,190.0 763.3,190.0 763.3,173.1 777.8,173.3 777.8,190.0 780.0,190.0 780.0,173.3 785.6,173.3 785.6,194.2 747.8,194.4" fill="#f4590e" /><polygon points="744.4,200.9 760.0,200.6 760.0,203.3 744.2,203.8" fill="#f4590e" /><polygon points="744.0,205.0 760.0,204.4 760.2,213.1 743.1,214.0" fill="#f4590e" /><polygon points="770.0,196.9 784.4,195.1 784.4,197.3 770.0,199.3" fill="#f4590e" /><ellipse cx="778.9" cy="205.8" rx="4.9" ry="4.4" fill="#e9e9e9" transform="rotate(-25 778.9 205.8)"/><ellipse cx="779.1" cy="206.0" rx="2.7" ry="2.2" fill="#17125e" transform="rotate(-25 779.1 206.0)"/><polygon points="767.8,202.2 774.4,200.6 775.6,203.9 769.4,205.6" fill="#d8d8e4" /><polygon points="636.7,177.2 643.9,161.7 648.9,158.9 700.0,156.7 700.0,217.8 662.2,224.4 652.2,222.2 627.8,217.8 625.6,225.0 606.7,225.8 606.1,190.0 611.1,183.9 636.7,178.3" fill="#17125e" /><polygon points="638.9,176.7 646.7,162.8 700.0,159.1 700.0,162.2 688.9,161.1 648.9,163.6 644.2,175.3" fill="#f4590e" /><polygon points="646.7,172.4 649.8,165.1 677.8,163.8 666.7,166.7 655.6,169.1 648.9,173.3" fill="#fff" /><polygon points="663.3,173.3 668.9,171.7 666.7,176.7" fill="#fff" /><polygon points="670.0,172.2 673.9,171.7 673.3,177.8 669.4,177.2" fill="#fff" /><polygon points="675.6,173.3 680.0,173.9 678.3,178.9 675.0,177.8" fill="#fff" /><polygon points="653.3,176.1 662.2,173.3 662.2,174.7 654.4,177.2" fill="#fff" /><polygon points="616.7,184.2 636.7,179.1 682.2,181.3 668.9,183.1 641.3,187.6" fill="#f4590e" /><polygon points="641.3,188.9 671.1,184.4 682.8,182.2 688.9,162.8 692.2,162.2 700.0,161.7 700.0,206.7 695.6,206.7 694.4,201.7 682.2,194.2 662.2,194.0 647.8,201.8 644.4,211.1 638.3,211.1" fill="#f4590e" /><polygon points="687.8,162.8 689.4,162.8 683.6,193.3 682.0,192.2" fill="#17125e" /><polygon points="612.8,191.0 632.4,191.2 632.4,192.3 612.8,192.2" fill="#8f8fb0" /><polygon points="612.8,194.6 632.4,194.8 632.4,195.9 612.8,195.8" fill="#8f8fb0" /><polygon points="612.8,198.2 632.4,198.4 632.4,199.6 612.8,199.4" fill="#8f8fb0" /><polygon points="612.8,201.8 632.4,202.0 632.4,203.1 612.8,203.0" fill="#8f8fb0" /><path d="M648.9 203.9 Q657.8 195.6 673.3 195.0 Q688.9 195.0 695.6 206.7 L691.1 207.8 Q686.7 200.0 676.7 199.8 Q665.6 200.6 660.0 212.2 Z" fill="#f4590e"/><polygon points="647.8,204.4 652.2,202.2 660.0,203.9 666.7,202.2 662.2,212.2 658.3,212.2 657.8,206.7 648.9,205.6" fill="#f4590e" /><ellipse cx="651.7" cy="208.4" rx="5.3" ry="4.7" fill="#17125e" /><ellipse cx="651.7" cy="208.4" rx="4.0" ry="3.3" fill="#fff" /><polygon points="627.8,217.8 666.7,221.1 666.7,225.6 652.2,224.7 642.2,223.1 627.8,220.2" fill="#17125e" /><ellipse cx="668.3" cy="217.8" rx="15.6" ry="10.9" fill="#17125e" /><ellipse cx="677.8" cy="215.3" rx="13.6" ry="14.4" fill="#17125e" /><ellipse cx="680.2" cy="214.9" rx="5.1" ry="9.1" fill="#d4d4d4" transform="rotate(8 680.2 214.9)"/><ellipse cx="680.2" cy="214.9" rx="2.2" ry="4.9" fill="#17125e" transform="rotate(8 680.2 214.9)"/><polygon points="606.7,211.1 665.6,215.8 663.6,220.2 629.1,219.6 627.8,216.7 606.7,214.7" fill="#bdbdbd" /><polygon points="613.3,215.6 622.2,216.0 622.2,217.1 613.3,216.9" fill="#fff" /><polygon points="690.0,158.9 726.7,155.6 736.7,155.0 736.7,195.6 726.7,195.6 723.3,191.7 690.0,190.6" fill="#17125e" /><polygon points="678.9,159.8 704.4,157.8 707.8,159.8 703.3,162.2 699.4,166.7 692.2,161.1 683.3,162.2" fill="#f4590e" /><polygon points="681.1,188.9 723.3,191.7 724.7,202.2 694.4,205.0 690.0,195.6 681.1,193.3" fill="#f4590e" /><polygon points="683.3,162.2 692.2,161.1 688.9,176.7 682.2,187.8" fill="#f4590e" /><polygon points="694.4,172.2 691.1,174.4 691.1,178.9 696.7,181.7 703.3,181.1 700.0,177.8" fill="#1e9fd8" /><polygon points="711.1,177.8 722.2,175.6 728.9,182.8 712.2,184.4 706.7,183.9" fill="#1e9fd8" /><ellipse cx="706.7" cy="172.4" rx="9.8" ry="6.4" fill="#fff" transform="rotate(-8 706.7 172.4)"/><polygon points="702.2,167.8 705.6,167.2 705.0,173.3 701.7,173.3" fill="#17125e" /><polygon points="708.9,169.1 722.2,169.1 717.8,171.7 710.0,171.1" fill="#17125e" /><polygon points="701.1,174.4 708.9,173.9 706.7,176.1 702.2,176.1" fill="#8a8ab0" /><polygon points="699.4,166.1 705.6,161.3 718.3,160.0 723.3,164.4 724.7,169.1 716.7,167.8 710.0,166.7 701.1,167.8" fill="#1e9fd8" /><polygon points="716.7,167.8 724.7,169.1 727.2,170.6 718.9,170.6" fill="#2a3a8a" /><polygon points="706.7,184.7 729.4,182.8 733.6,187.6 731.3,190.2 706.7,189.1" fill="#fff" /><polygon points="697.8,183.9 701.7,182.2 702.4,179.4 705.0,179.4 705.0,183.3 707.2,183.9 706.9,189.8 698.9,190.2" fill="#fff" /><polygon points="699.4,185.0 705.6,184.8 705.6,185.4 699.4,185.7" fill="#9a9ab8" /><polygon points="699.4,186.9 705.6,186.7 705.6,187.3 699.4,187.6" fill="#9a9ab8" /><polygon points="685.6,205.6 726.7,202.2 727.8,211.1 696.7,218.3 685.6,217.8" fill="#17125e" /><ellipse cx="704.4" cy="211.3" rx="4.4" ry="6.4" fill="#c9c9c9" transform="rotate(18 704.4 211.3)"/><ellipse cx="706.9" cy="211.8" rx="1.8" ry="5.6" fill="#17125e" transform="rotate(18 706.9 211.8)"/><ellipse cx="714.7" cy="209.8" rx="4.4" ry="6.4" fill="#c9c9c9" transform="rotate(18 714.7 209.8)"/><ellipse cx="717.1" cy="210.2" rx="1.8" ry="5.6" fill="#17125e" transform="rotate(18 717.1 210.2)"/><ellipse cx="723.3" cy="208.4" rx="4.4" ry="6.4" fill="#c9c9c9" transform="rotate(18 723.3 208.4)"/><ellipse cx="725.8" cy="208.9" rx="1.8" ry="5.6" fill="#17125e" transform="rotate(18 725.8 208.9)"/></g></svg></div><div id="photof"><svg width="191" height="130"><rect x="1.3" y="1.3" width="188" height="127" rx="4" ry="4" fill="none" stroke="#2c6c9d" stroke-width="1.35"/></svg></div>
<div class="abs" style="left:602.3px;top:240.1px"><svg width="23" height="23" viewBox="0 0 23 23" ><defs><linearGradient id="g33" x1="0" y1="0" x2="0" y2="1"><stop offset="0" stop-color="#a6a6a6"/><stop offset="1" stop-color="#808080"/></linearGradient></defs><circle cx="11.5" cy="11.5" r="10" fill="url(#g33)" stroke="#c4c4c4" stroke-width="1"/><path d="M11.500 5.800 L5.800 11.500 L11.500 17.200 M6.200 11.500 L17.500 11.500" stroke="#fff" stroke-width="2.600" fill="none" stroke-linejoin="miter"/></svg></div>
<div class="abs" style="left:721.3px;top:240.1px"><svg width="23" height="23" viewBox="0 0 23 23" ><defs><linearGradient id="g34" x1="0" y1="0" x2="0" y2="1"><stop offset="0" stop-color="#a6a6a6"/><stop offset="1" stop-color="#808080"/></linearGradient></defs><circle cx="11.5" cy="11.5" r="10" fill="url(#g34)" stroke="#c4c4c4" stroke-width="1"/><g transform="translate(23,0) scale(-1,1)"><path d="M11.500 5.800 L5.800 11.500 L11.500 17.200 M6.200 11.500 L17.500 11.500" stroke="#fff" stroke-width="2.600" fill="none" stroke-linejoin="miter"/></g></svg></div>
<div class="lbl" style="left:653px;top:245px;">Foto 1/1</div>
<div class="lbl" style="left:796px;top:104px;">Tipo:</div>
<div class="rad on" style="left:879.8px;top:106.3px"></div>
<div class="gl" style="left:902px;top:106.5px;">Motorista</div>
<div class="rad" style="left:879.8px;top:124.1px"></div>
<div class="gl" style="left:900px;top:124.5px;">Ajudante</div>
<div class="lbl" style="left:796px;top:150px;">Tipo docum.:</div>
<div class="cmb" style="left:880px;top:149px;width:60px;height:20.5px;line-height:18.5px"><span class="sg">RG</span><i style="height:18.5px"></i></div>
<div class="lbl" style="left:944px;top:150px;">Outro:</div>
<div class="inp" style="left:984px;top:148px;width:122px;height:21px;"></div>
<div class="abs" style="left:1111px;top:151px"><svg width="16" height="16" viewBox="0 0 16 16" ><path d="M8.600 8.600 L13.500 14" stroke="#d2d2d2" stroke-width="2.2" stroke-linecap="round"/><circle cx="6" cy="5.800" r="4.100" fill="#f6f6f6" stroke="#c2c2c2" stroke-width="1.4"/><path d="M3.800 5.200 a2.600 2.600 0 0 1 2.600 -2" stroke="#fff" stroke-width="1" fill="none"/></svg></div>
<div class="lbl" style="left:796px;top:174px;">Documento:</div>
<div class="inp" style="left:880px;top:173px;width:180px;height:21px;"><span class="sn">123456</span></div>
<div class="abs" style="left:1065px;top:175px"><svg width="16" height="16" viewBox="0 0 16 16" ><path d="M8.600 8.600 L13.500 14" stroke="#d2d2d2" stroke-width="2.2" stroke-linecap="round"/><circle cx="6" cy="5.800" r="4.100" fill="#f6f6f6" stroke="#c2c2c2" stroke-width="1.4"/><path d="M3.800 5.200 a2.600 2.600 0 0 1 2.600 -2" stroke="#fff" stroke-width="1" fill="none"/></svg></div>
<div class="lbl" style="left:796px;top:199px;">Nome:</div>
<div class="inp" style="left:880px;top:197px;width:223px;height:21px;"><span class="sx">PAULO</span></div>
<div class="lbl" style="left:796px;top:223px;">Crachá:</div>
<div class="inp" style="left:880px;top:222px;width:135px;height:21px;"><span class="sn">1000073</span></div>
<div class="abs" style="left:1019px;top:224px"><svg width="16" height="16" viewBox="0 0 16 16" ><path d="M8.600 8.600 L13.500 14" stroke="#d2d2d2" stroke-width="2.2" stroke-linecap="round"/><circle cx="6" cy="5.800" r="4.100" fill="#f6f6f6" stroke="#c2c2c2" stroke-width="1.4"/><path d="M3.800 5.200 a2.600 2.600 0 0 1 2.600 -2" stroke="#fff" stroke-width="1" fill="none"/></svg></div>
<div class="lbl" style="left:796px;top:247px;">Telefone:</div>
<div class="inp" style="left:880px;top:246px;width:223px;height:21px;"><span class="sn">47 99090909</span></div>
<div class="grp" style="left:242.5px;top:285.5px"><svg width="892" height="320.5"><rect x="1" y="1" width="890" height="318.5" rx="4.5" ry="4.5" fill="none" stroke="#2c6c9d" stroke-width="1.35"/></svg></div>
<div class="leg" style="left:253px;top:280.3px;width:54px;"><span>Principal</span></div>
<div id="grid">
<div class="gh" style="left:0px;width:139px;padding-left:17.5px"><i class="ha"></i><span class="sg">*Depositante</span></div>
<div class="gh" style="left:139px;width:20px;padding-left:0px"><span class="sg"></span></div>
<div class="gh" style="left:159px;width:266px;padding-left:17.5px"><i class="ha"></i><span class="sg">Descrição</span></div>
<div class="gh" style="left:425px;width:181px;padding-left:17.5px"><i class="ha"></i><span class="sg">Tipo CESV Depositante</span></div>
<div class="gh" style="left:606px;width:126px;padding-left:4.5px"><span class="sg">Ordem Serviço</span></div>
<div class="gh" style="left:732px;width:114px;padding-left:17.5px"><i class="ha"></i><span class="sg">Doca</span></div>
<div class="gc" style="left:0px;width:139px"><span class="sg">38</span></div>
<div class="gc" style="left:139px;width:20px"><span class="sg"></span></div>
<div class="gc" style="left:159px;width:266px"><span class="sg">A.S. SVTOT</span></div>
<div class="gc" style="left:425px;width:181px"><span class="sg">Recebimento</span></div>
<div class="gc" style="left:606px;width:126px"><span class="sg"></span></div>
<div class="gc" style="left:732px;width:114px"><span class="sg"></span></div>
<div class="abs" style="left:140px;top:22px"><svg width="16" height="16" viewBox="0 0 16 16" ><path d="M8.2 8.2 L13 13.6" stroke="#ee8a2a" stroke-width="2.3" stroke-linecap="round"/><circle cx="5.800" cy="5.600" r="3.9" fill="#e4f3fc" stroke="#8fb0c8" stroke-width="1.4"/><path d="M3.600 5 a2.600 2.600 0 0 1 2.600 -2" stroke="#fff" stroke-width="1" fill="none"/></svg></div>
<div class="abs" style="left:659px;top:22px"><svg width="16" height="16" viewBox="0 0 16 16" ><path d="M8.2 8.2 L13 13.6" stroke="#ee8a2a" stroke-width="2.3" stroke-linecap="round"/><circle cx="5.800" cy="5.600" r="3.9" fill="#e4f3fc" stroke="#8fb0c8" stroke-width="1.4"/><path d="M3.600 5 a2.600 2.600 0 0 1 2.600 -2" stroke="#fff" stroke-width="1" fill="none"/></svg></div>
<div id="vs"><i class="up"></i><i class="grip"></i><i class="dn"></i></div>
<div id="hs"><i class="lf"></i><i class="hgrip"></i><i class="rt"></i></div>
</div>
<div class="lbl" style="left:260px;top:429.6px;">Transportador:</div>
<div class="inp" style="left:405px;top:424px;width:138px;height:21px;"><span class="sn">31</span></div>
<div class="abs" style="left:549px;top:426px"><svg width="16" height="16" viewBox="0 0 16 16" ><path d="M8.600 8.600 L13.500 14" stroke="#d2d2d2" stroke-width="2.2" stroke-linecap="round"/><circle cx="6" cy="5.800" r="4.100" fill="#f6f6f6" stroke="#c2c2c2" stroke-width="1.4"/><path d="M3.800 5.200 a2.600 2.600 0 0 1 2.600 -2" stroke="#fff" stroke-width="1" fill="none"/></svg></div>
<div class="inp" style="left:575px;top:424px;width:300px;height:21px;"><span class="sx">TRANSPORTADORA CORRETA LTDA</span></div>
<div class="lbl" style="left:260px;top:453.5px;">Placa Veículo:</div>
<div class="inp" style="left:405px;top:448px;width:79px;height:21px;line-height:20.3px"><span class="sx">ABC1711</span></div>
<div class="lbl" style="left:506px;top:453.5px;">Carreta 1:</div>
<div class="inp" style="left:575px;top:448px;width:79px;height:21px;"></div>
<div class="lbl" style="left:676px;top:453.5px;">Carreta 2:</div>
<div class="inp" style="left:745px;top:448px;width:79px;height:21px;"></div>
<div class="lbl" style="left:260px;top:478.4px;">UF Placa:</div>
<div class="inp" style="left:405px;top:473px;width:29px;height:21px;"><span class="sx">SC</span></div>
<div class="abs" style="left:439px;top:475px"><svg width="16" height="16" viewBox="0 0 16 16" ><path d="M8.600 8.600 L13.500 14" stroke="#d2d2d2" stroke-width="2.2" stroke-linecap="round"/><circle cx="6" cy="5.800" r="4.100" fill="#f6f6f6" stroke="#c2c2c2" stroke-width="1.4"/><path d="M3.800 5.200 a2.600 2.600 0 0 1 2.600 -2" stroke="#fff" stroke-width="1" fill="none"/></svg></div>
<div class="chk" style="left:481px;top:472.5px"></div>
<div class="gl" style="left:503px;top:472.5px;">Controle Lacre</div>
<div class="chk" style="left:644px;top:472.5px"></div>
<div class="gl" style="left:665px;top:472.5px;">Devolução</div>
<div class="chk" style="left:764px;top:472.5px"></div>
<div class="gl" style="left:786px;top:472.5px;">Cross-Docking</div>
<div class="chk" style="left:918px;top:472.5px"></div>
<div class="gl" style="left:939px;top:472.5px;">Cavalo Mecânico Ausente</div>
<div class="lbl" style="left:260px;top:503px;">Tipo Veículo:</div>
<div class="inp" style="left:405px;top:497px;width:96px;height:21px;"><span class="sn">1</span></div>
<div class="abs" style="left:507px;top:499px"><svg width="16" height="16" viewBox="0 0 16 16" ><path d="M8.600 8.600 L13.500 14" stroke="#d2d2d2" stroke-width="2.2" stroke-linecap="round"/><circle cx="6" cy="5.800" r="4.100" fill="#f6f6f6" stroke="#c2c2c2" stroke-width="1.4"/><path d="M3.800 5.200 a2.600 2.600 0 0 1 2.600 -2" stroke="#fff" stroke-width="1" fill="none"/></svg></div>
<div class="inp" style="left:533px;top:497px;width:206px;height:21px;"><span class="sx">CARRETA</span></div>
<div class="bl" style="left:761px;top:502px;">Plano de Embarque:</div>
<div class="inp" style="left:901px;top:497px;width:93px;height:21px;"></div>
<div class="bl" style="left:260px;top:526.5px;">Data/Hora Inclusão:</div>
<div class="inp" style="left:405px;top:522px;width:87px;height:21px;padding-left:16px;line-height:20.3px"><span class="sn">17/11/2020</span></div>
<div class="abs" style="left:496px;top:524.5px"><svg width="15" height="14" viewBox="0 0 15 14" ><rect x="0.5" y="0.5" width="14" height="13" fill="#fff" stroke="#8a8a9a"/><rect x="1" y="1" width="13" height="3" fill="#6f88c2"/><path d="M1 6.5h13M1 9.5h13M4.5 4v9.5M7.5 4v9.5M10.5 4v9.5" stroke="#9a9aa8" stroke-width="0.8"/><rect x="5" y="7" width="2.5" height="2.5" fill="#e34a4a"/></svg></div>
<div class="inp" style="left:517px;top:522px;width:79px;height:21px;line-height:20.3px"><span class="sn">14:09:35</span></div>
<div class="bl" style="left:618px;top:527px;">Responsável Inclusão:</div>
<div class="inp" style="left:775px;top:522px;width:79px;height:21px;line-height:20.3px"><span class="sx">lg990604</span></div>
<div class="inp" style="left:857px;top:522px;width:223px;height:21px;line-height:20.3px"><span class="sx">Administrador</span></div>
<div class="lbl" style="left:260px;top:551.6px;">Container 1:</div>
<div class="inp" style="left:405px;top:546.5px;width:436px;height:21px;"></div>
<div class="lbl" style="left:260px;top:576px;">Container 2:</div>
<div class="inp" style="left:405px;top:570.5px;width:436px;height:21px;"></div>
<div id="hsep"></div><div id="split"></div>
<div id="status"></div>
<div id="sfield"></div>
<div id="slogo"><svg width="24" height="24" viewBox="0 0 24 24" ><defs><radialGradient id="g35" cx="0.42" cy="0.45" r="0.6"><stop offset="0" stop-color="#fff"/><stop offset="0.35" stop-color="#eaf6fd"/><stop offset="0.7" stop-color="#7cc4ea"/><stop offset="1" stop-color="#2a86c0"/></radialGradient><linearGradient id="g36" x1="0" y1="0.5" x2="1" y2="0.5"><stop offset="0" stop-color="#121e58"/><stop offset="0.5" stop-color="#17306e"/><stop offset="1" stop-color="#2a8ab8"/></linearGradient></defs><circle cx="12.2" cy="12.2" r="9.2" fill="url(#g36)"/><circle cx="12.8" cy="11.8" r="6.400" fill="url(#g35)"/></svg></div>
<div class="sbtn" style="left:1344px"><svg width="28" height="22" viewBox="0 0 28 22" ><path d="M9 6 L19 16" stroke="#1f9ad6" stroke-width="3"/><path d="M7 4 h6 l-6 6z M21 18 h-6 l6 -6z" fill="#1f9ad6"/></svg></div>
<div class="sbtn" style="left:1377px"><svg width="28" height="22" viewBox="0 0 28 22" ><path d="M10 2 a4 4 0 1 0 5 5 l-2 1 l-2 -2z" fill="#cfd6dd" stroke="#9aa4ae" stroke-width="0.7"/><path d="M9 13 L18 5 L20 13Z" fill="#f29a2a"/><rect x="6" y="13" width="16" height="6" rx="1" fill="#fff" stroke="#555" stroke-width="1.1"/><path d="M8 16h12" stroke="#888" stroke-width="1" stroke-dasharray="1.5 1"/></svg></div>
<div class="abs" style="left:1413px;top:876px"><svg width="23" height="18" viewBox="0 0 23 18" ><path d="M2.5 1 h17 a2 2 0 0 1 2 2 v8 a2 2 0 0 1 -2 2 h-4 l-2.5 3.5 l-2 -3.5 h-8.500 a2 2 0 0 1 -2 -2 v-8 a2 2 0 0 1 2 -2z" fill="#cfe3f7" stroke="#5b9bd8" stroke-width="1.3"/><path d="M4 4.5h14M4 6.8h14M4 9.100h14" stroke="#2d5e9c" stroke-width="1"/></svg></div>
</body>
</html>
